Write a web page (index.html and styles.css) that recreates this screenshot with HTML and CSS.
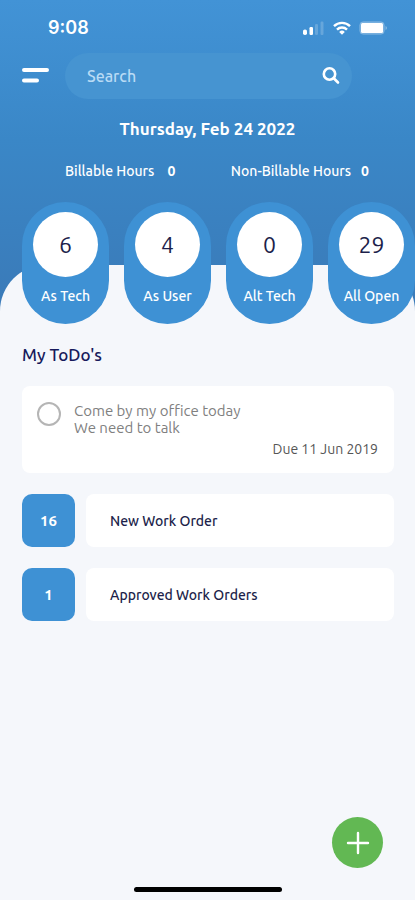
FILE: index.html
```html
<!DOCTYPE html>
<html lang="en">
<head>
<meta charset="utf-8">
<meta name="viewport" content="width=device-width, initial-scale=1">
<title>Dashboard</title>
<link rel="stylesheet" href="styles.css">
</head>
<body>
<header class="hero">
  <div class="status">
    <span class="clock">9:08</span>
    <div class="status-icons">
      <svg width="22" height="16" viewBox="0 0 22 16" aria-hidden="true">
        <rect x="0" y="9.500" width="4" height="5.500" rx="1.800" fill="#fff"/>
        <rect x="6.500" y="7" width="3.500" height="8" rx="1.200" fill="#fff"/>
        <rect x="12" y="4" width="3" height="11" rx="1.200" fill="#fff" opacity=".2"/>
        <rect x="17.500" y="1.500" width="3" height="13.500" rx="1.200" fill="#fff" opacity=".2"/>
      </svg>
      <svg width="18" height="14" viewBox="0 0 18 14" aria-hidden="true" fill="none" stroke="#fff" stroke-width="2.400">
        <path d="M1 5.200a11.300 11.300 0 0 1 16 0"/>
        <path d="M4 8.600a7 7 0 0 1 10 0"/>
        <path d="M9 13.700 6.200 10.900a4 4 0 0 1 5.600 0z" fill="#fff" stroke="none"/>
      </svg>
      <svg width="29" height="14" viewBox="0 0 29 14" aria-hidden="true">
        <rect x=".75" y=".75" width="24.500" height="12.500" rx="3.500" fill="#fff" fill-opacity=".25" stroke="#fff" stroke-width="1" stroke-opacity=".2"/>
        <rect x="2" y="2" width="22" height="10" rx="1.500" fill="#fff"/>
        <path d="M26.500 5v4q1.500-.6 1.500-2t-1.500-2z" fill="#fff" opacity=".35"/>
      </svg>
    </div>
  </div>
  <div class="toolbar">
    <button class="menu" type="button" aria-label="Menu">
      <svg width="27" height="16" viewBox="0 0 27 16" fill="none" stroke="#fff" stroke-width="4" stroke-linecap="round"><path d="M2 2h23M2 12.500h13"/></svg>
    </button>
    <form class="search">
      <input class="search-input" type="text" placeholder="Search" aria-label="Search">
      <button class="search-button" type="button" aria-label="Run search">
        <svg width="18" height="18" viewBox="0 0 18 18" fill="none" stroke="#fff" stroke-width="2.600" stroke-linecap="round"><circle cx="7.500" cy="7" r="5.700"/><path d="m12 11.500 4 4"/></svg>
      </button>
    </form>
  </div>
  <h1 class="date">Thursday, Feb 24 2022</h1>
  <div class="hours">
    <p class="hour">Billable Hours <b>0</b></p>
    <p class="hour hour-narrow">Non-Billable Hours <b>0</b></p>
  </div>
</header>
<main class="sheet">
  <nav class="tiles" aria-label="Tickets">
    <a class="tile" href="#tech"><span class="count">6</span>As Tech</a>
    <a class="tile" href="#user"><span class="count">4</span>As User</a>
    <a class="tile" href="#alt"><span class="count">0</span>Alt Tech</a>
    <a class="tile" href="#open"><span class="count">29</span>All Open</a>
  </nav>
  <section class="todos">
    <h2 class="heading">My ToDo's</h2>
    <div class="todo">
      <input class="todo-check" type="checkbox" id="todo-1">
      <div class="todo-body">
        <label class="todo-text" for="todo-1">Come by my office today<br>We need to talk</label>
        <p class="due">Due 11 Jun 2019</p>
      </div>
    </div>
    <a class="order" href="#new"><span class="badge">16</span><span class="order-name">New Work Order</span></a>
    <a class="order" href="#approved"><span class="badge">1</span><span class="order-name">Approved Work Orders</span></a>
  </section>
</main>
<footer class="footer">
  <button class="add" type="button" aria-label="Add">
    <svg width="24" height="24" viewBox="0 0 24 24" fill="none" stroke="#fff" stroke-width="2.400" stroke-linecap="round"><path d="M12 2v20M2 12h20"/></svg>
  </button>
  <div class="home-bar"></div>
</footer>
</body>
</html>
```
FILE: styles.css
```css
* { box-sizing: border-box; }
body {
  margin: 0;
  min-height: 100vh;
  display: flex;
  flex-direction: column;
  background: #f5f7fb;
  color: #1d1f4b;
  font-family: Ubuntu, "Noto Sans", sans-serif;
  font-size: 14px;
  line-height: 20px;
}
h1, h2, p { margin: 0; }
button { padding: 0; border: 0; background: none; display: grid; place-items: center; }
a { color: inherit; text-decoration: none; }

.hero {
  padding: 16px 22px 130px;
  background: linear-gradient(#4293d6, #3a87c7 45%, #3a7ab8);
  color: #fff;
}
.status {
  display: flex;
  justify-content: space-between;
  align-items: center;
  height: 24px;
  padding: 0 5px 0 26px;
}
.clock { font-family: Inter, sans-serif; font-size: 18px; font-weight: 600; }
.status-icons { display: flex; align-items: center; gap: 8px; }
.toolbar { display: flex; align-items: center; gap: 16px; margin-top: 13px; padding-right: 41px; }
.search {
  flex: 1;
  display: flex;
  align-items: center;
  height: 46px;
  padding: 0 12px 0 22px;
  border-radius: 23px;
  background: #4694d1;
}
.search-input {
  flex: 1;
  min-width: 0;
  padding: 0;
  border: 0;
  outline: 0;
  background: none;
  color: #fff;
  font: inherit;
  font-size: 16px;
  font-weight: 500;
}
.search-input::placeholder { color: #b9dbf5; opacity: 1; }
.date { margin-top: 20px; font-size: 17px; font-weight: 700; text-align: center; }
.hours { display: flex; justify-content: space-between; margin-top: 22px; padding: 0 24px 0 43px; }
.hour { display: flex; gap: 13px; font-weight: 500; }
.hour-narrow { gap: 10px; }

.sheet {
  flex: 1;
  margin-top: -46px;
  border-radius: 46px 46px 0 0;
  background: #f5f7fb;
}
.tiles {
  display: grid;
  grid-template-columns: repeat(4, 1fr);
  gap: 15px;
  margin-top: -63px;
  padding-left: 22px;
}
.tile {
  display: flex;
  flex-direction: column;
  align-items: center;
  gap: 9px;
  height: 122px;
  padding-top: 10px;
  border-radius: 44px;
  background: #3e91d4;
  color: #fff;
  font-weight: 500;
}
.count {
  display: grid;
  place-items: center;
  width: 65px;
  height: 65px;
  border-radius: 50%;
  background: #fff;
  color: #1d1f4b;
  font-size: 23px;
  font-weight: 400;
}
.todos { display: grid; gap: 21px; padding: 21px 21px 22px 22px; }
.heading { color: #171a5c; font-size: 17px; font-weight: 500; }
.todo {
  display: flex;
  gap: 13px;
  padding: 16px 16px 14px 15px;
  border-radius: 8px;
  background: #fff;
}
.todo-check {
  appearance: none;
  width: 24px;
  height: 24px;
  margin: 0;
  border: 2px solid #b5b5b5;
  border-radius: 50%;
}
.todo-body { flex: 1; }
.todo-text { display: block; color: #808080; font-size: 15px; line-height: 17px; }
.due { margin-top: 3px; color: #555; text-align: right; }
.order { display: flex; gap: 11px; font-weight: 500; }
.badge {
  display: grid;
  place-items: center;
  width: 53px;
  height: 53px;
  border-radius: 10px;
  background: #3e91d4;
  color: #fff;
  font-size: 15px;
  font-weight: 700;
}
.order-name { flex: 1; display: flex; align-items: center; padding: 0 24px; border-radius: 8px; background: #fff; }
.footer { display: flex; flex-direction: column; gap: 19px; padding-bottom: 8px; }
.add {
  align-self: flex-end;
  width: 51px;
  height: 51px;
  margin-right: 32px;
  border-radius: 50%;
  background: #62b853;
}
.home-bar { align-self: center; width: 148px; height: 5px; border-radius: 3px; background: #000; }
```
